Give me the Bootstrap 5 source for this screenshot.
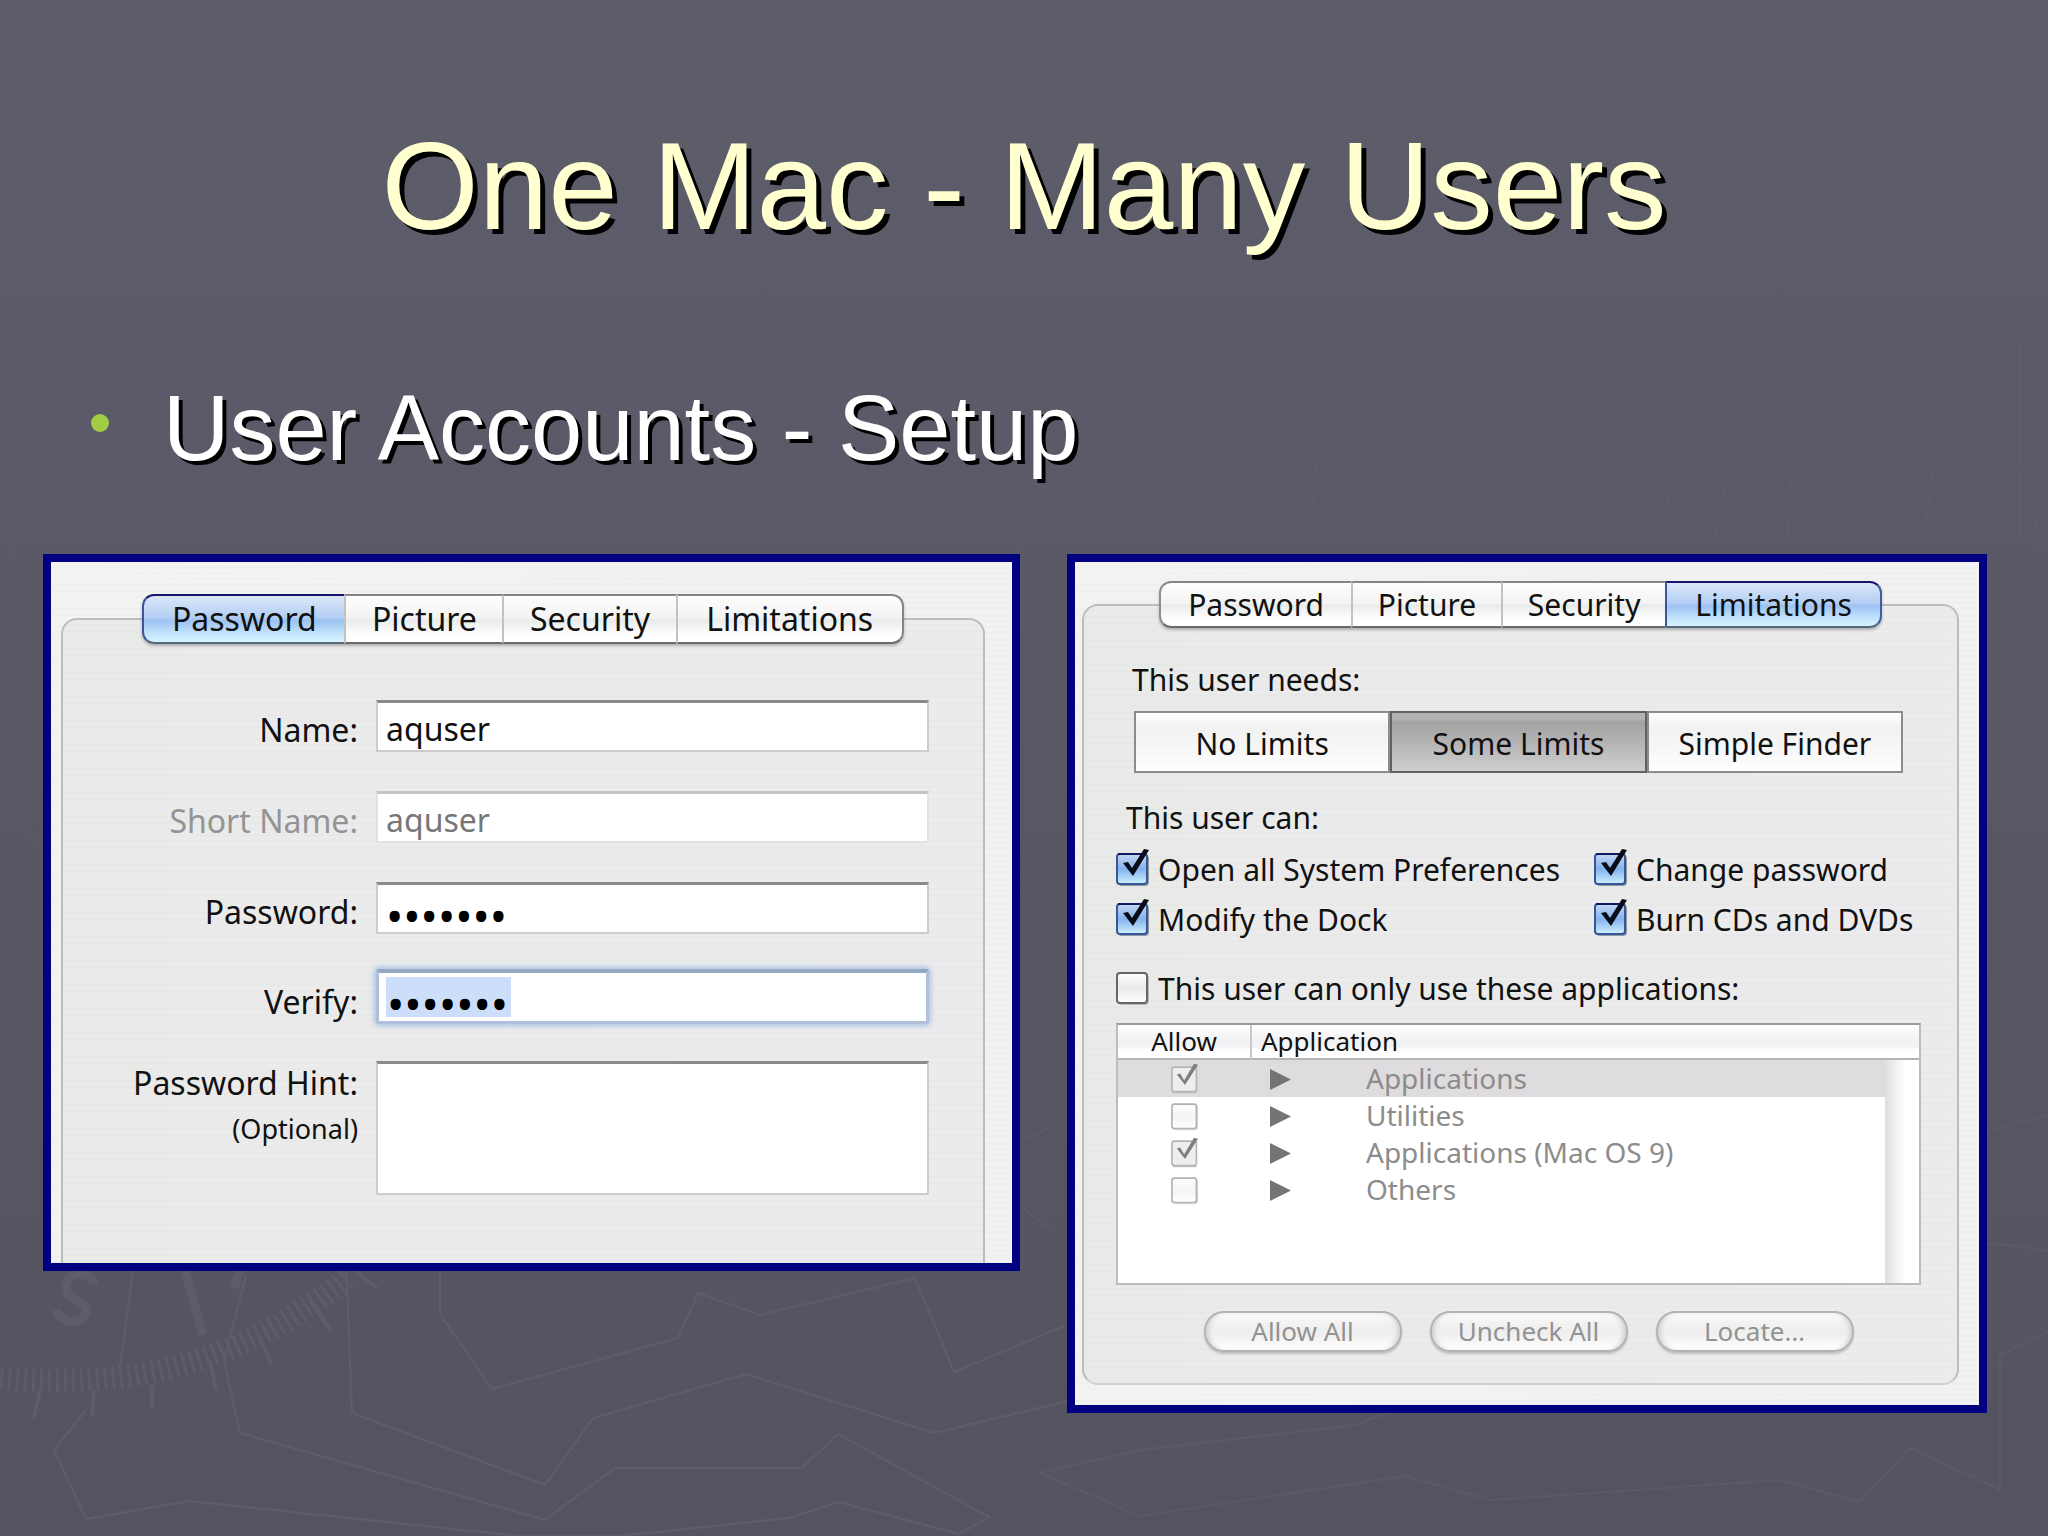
<!DOCTYPE html>
<html lang="en">
<head>
<meta charset="utf-8">
<meta name="viewport" content="width=device-width, initial-scale=1">
<title>One Mac - Many Users</title>
<link href="https://cdn.jsdelivr.net/npm/bootstrap@5.3.0/dist/css/bootstrap.min.css" rel="stylesheet">
<style>
body{font-family:"Noto Sans","Open Sans",sans-serif;color:#111;background:#555461}
.slide{position:relative;min-height:100vh;padding:114px 61px 40px 43px;background:linear-gradient(#5e5e6a 0,#5b5a69 25%,#575664 60%,#545360 100%);overflow:hidden}
.backdrop{position:absolute;inset:0;width:100%;height:100%;fill:none;stroke:#605f6d;stroke-width:3;opacity:.75}
.slide-body{position:relative}
.slide-title{font:400 125px/144px "Liberation Sans",Arial,sans-serif;color:#ffffcf;text-shadow:5px 5px 0 #000;margin:0 0 118px 18px}
.topic{font:400 92px/104px "Liberation Sans",Arial,sans-serif;color:#fff;text-shadow:4px 4px 0 #000;margin-bottom:74px;padding-left:48px;gap:54px}
.topic-dot{width:18px;height:18px;border-radius:50%;background:#a3cc45;margin-bottom:10px}
.shots{display:grid;grid-template-columns:minmax(0,977fr) minmax(0,920fr);gap:47px;align-items:start}
.shot{border:8px solid #000080;background:repeating-linear-gradient(transparent 0 4px,rgba(60,80,60,.018) 4px 6px),linear-gradient(90deg,#f2f4f1,#f3f3f3 30%,#f2f1f3)}
.shot-a{padding:32px 27px 0 10px;font-size:32px}
.shot-b{padding:19px 20px 20px 7px;font-size:30px}
.tabstrip{position:relative;z-index:1;display:grid;grid-template-columns:202fr 158fr 173fr 228fr;width:82.4%;margin:0 auto;border-radius:12px;box-shadow:0 2px 3px rgba(0,0,0,.25)}
.shot-a .tabstrip{height:50px;margin-bottom:-26px}
.shot-b .tabstrip{height:47px;margin-bottom:-24px}
.tabstrip button{border:2px solid #858585;border-right:0;border-bottom-color:#6a6a6a;border-left-color:#c2c2c2;padding:0;line-height:40px;color:#111;background:linear-gradient(#fdfdfd,#f2f3f2 48%,#e9ebea 52%,#fff 85%)}
.tabstrip button:first-child{border-left-color:#8f8f8f;border-radius:12px 0 0 12px}
.tabstrip button:last-child{border-right:2px solid #858585;border-radius:0 12px 12px 0}
.tabstrip button.current{border-color:#15186a #3f5c9c #56687f #3c559c;background:linear-gradient(#dbe7f8,#b4cff4 46%,#9cc2f3 54%,#c2e2fc 80%,#d8f3ff)}
.pane{border:2px solid #bcbebc;border-radius:16px;background:repeating-linear-gradient(transparent 0 4px,rgba(0,0,0,.012) 4px 6px),linear-gradient(90deg,#e9ebe8,#ebebeb 22%,#ecebed)}
.shot-a .pane{border-bottom:0;border-radius:16px 16px 0 0;padding:80px 54px 68px 0}
.shot-b .pane{padding:50px 36px 31px 32px;border-bottom-color:#d0d0d0}
.line{display:flex;align-items:flex-end;margin-bottom:39px}
.line label{width:313px;flex:none;padding-right:18px;text-align:right;line-height:44px}
.line.before-focus{margin-bottom:35px}
.line.focused{margin-bottom:37px}
.entry{flex:1;min-width:0;height:52px;border:2px solid #cdcdcd;border-top:3px solid #8a8a8a;border-radius:0;padding:4px 8px 0;background:#fff;color:#111;line-height:40px;display:block;outline:0;resize:none}
.entry:disabled{color:#777;border-color:#e2e2e2;border-top-color:#c4c2c4}
.entry[type=password]{font-family:"Noto Sans",sans-serif;font-size:46px;padding-top:12px;color:#000}
.focused .entry{height:55px;border:3px solid #b2bfdb;border-top:4px solid #94a9c0;border-radius:3px;box-shadow:0 0 5px 2px #a9c6e6;background:linear-gradient(#cddefa,#cddefa) 7px 4px/125px 40px no-repeat,#fff}
.line .hint{height:134px}
.dim{color:#949494}
.fine{font-size:27px}
.copy{line-height:44px;padding-top:2px}
.needs{padding-left:16px;margin-bottom:9px}
.levels{display:grid;grid-template-columns:repeat(3,1fr);margin:0 18px 21px 18px;height:62px}
.levels button{border:2px solid #8c8c8c;background:linear-gradient(#fff,#f1f1f1 25%,#f6f6f6 60%,#fff);padding:2px 0 0;color:#111}
.levels .pressed{border-color:#626262;background:linear-gradient(#b5b4b5 0 6px,#a3a2a3 9px,#b4b3b4 50%,#cfcecf)}
.can{padding-left:10px;margin-bottom:6px}
.rights{display:grid;grid-template-columns:478px 1fr;row-gap:6px;margin-right:-30px;margin-bottom:25px}
.tick-row{display:flex;align-items:center;gap:8px;height:44px;white-space:nowrap}
.tick-row label{line-height:44px;padding-top:3px}
.tick{appearance:none;margin:0;flex:none;width:34px;height:38px;background:url("data:image/svg+xml,%3Csvg xmlns='http://www.w3.org/2000/svg' viewBox='0 0 34 38'%3E%3Cdefs%3E%3ClinearGradient id='g' x2='0' y2='1'%3E%3Cstop stop-color='%23fff'/%3E%3Cstop offset='.5' stop-color='%23eaeaea'/%3E%3Cstop offset='1' stop-color='%23fff'/%3E%3C/linearGradient%3E%3C/defs%3E%3Crect x='2' y='6' width='31' height='31' rx='4' fill='%23bbb'/%3E%3Crect x='1' y='5' width='30' height='30' rx='3' fill='url(%23g)' stroke='%23666' stroke-width='2'/%3E%3C/svg%3E") center/100% 100% no-repeat}
.tick:checked{background-image:url("data:image/svg+xml,%3Csvg xmlns='http://www.w3.org/2000/svg' viewBox='0 0 34 38'%3E%3Cdefs%3E%3ClinearGradient id='g' x2='0' y2='1'%3E%3Cstop stop-color='%23c5d8f4'/%3E%3Cstop offset='.5' stop-color='%2384b2ec'/%3E%3Cstop offset='1' stop-color='%23cdf2ff'/%3E%3C/linearGradient%3E%3C/defs%3E%3Crect x='2' y='6' width='31' height='31' rx='4' fill='%238d9aa0'/%3E%3Crect x='1' y='5' width='30' height='30' rx='3' fill='url(%23g)' stroke='%233a5596' stroke-width='2'/%3E%3Cpath d='M2 5h28' stroke='%23111760' stroke-width='2'/%3E%3Cpath d='M7 14l5-1 4 6L28 0l5 1-16 26z' fill='%23080c18'/%3E%3C/svg%3E")}
.tick-off{display:block;width:28px;height:31px;margin:0 auto;opacity:.5}
.tick-off:checked{opacity:1;background-image:url("data:image/svg+xml,%3Csvg xmlns='http://www.w3.org/2000/svg' viewBox='0 0 34 38'%3E%3Crect x='1' y='5' width='30' height='30' rx='3' fill='%23eee' stroke='%23b4b4b4' stroke-width='2'/%3E%3Cpath d='M2 36h29' stroke='%23bbb' stroke-width='2'/%3E%3Cpath d='M7 14l4-1 5 8L28 1l5 1-16 25z' fill='%23808080'/%3E%3C/svg%3E")}
.only{margin-bottom:14px}
.applist{min-height:262px;border:2px solid #bcbcbc;border-top-color:#9a9a9a;background:linear-gradient(90deg,#dedede,#f0f0f2 30%,#fff 60%) right/34px 100% no-repeat,#fff;margin-bottom:26px}
.applist table{width:100%;table-layout:fixed;border-collapse:separate;border-spacing:0;background:linear-gradient(#fff,#fff) left/calc(100% - 34px) 100% no-repeat;font-size:28px;color:#8c8c8c}
.applist th{height:35px;font-size:26px;font-weight:400;line-height:30px;color:#111;padding:0 0 2px;border-bottom:2px solid #b4b4b4;background:linear-gradient(#fff,#f2f2f4 45%,#f2f2f4 65%,#fff 75%)}
.applist th:first-child{border-right:2px solid #c9c9c9}
.applist th:nth-child(2){padding-left:9px}
.applist td{height:37px;padding:0;line-height:37px}
.applist .chosen td:not(:last-child){background:#dedcde}
.twist{width:21px;height:21px;margin:0 75px 4px 18px;fill:#747474}
.pills{display:flex;justify-content:center;gap:28px;padding-left:20px}
.pills button{width:198px;height:41px;border:2px solid #b3b3b3;border-radius:20px;background:linear-gradient(#fafafa,#eee 45%,#f0f0f0 60%,#fff);box-shadow:0 2px 2px rgba(0,0,0,.18),inset 5px 0 5px -3px #ccc,inset -5px 0 5px -3px #ccc;color:#929292;font-size:26px;line-height:34px;padding:0 0 1px}
</style>
<script src="https://cdn.jsdelivr.net/npm/bootstrap@5.3.0/dist/js/bootstrap.bundle.min.js" defer></script>
</head>
<body>
<main class="slide">
<svg class="backdrop" viewBox="0 0 2048 1536" preserveAspectRatio="xMidYMid slice" aria-hidden="true">
<path d="M133 1270l-13 97M86 1410l-32 40 32 69 103-18 330 35h100l170-18 50-16 120 32 30-17-151-83-36 34H615l-70 52-305-87-16-72 22-86M346 1260l6 153 193 72 48-67 153-44 188 59 134-32M440 1260v54l52 75 186-51 20-45 62 22 155-37 39 94 110-46" stroke-width="2.5"/>
<path d="M0 1378q205 20 350-103" stroke-width="23" stroke-dasharray="3 5"/>
<path d="M40 1390l-6 28M94 1390l-2 27M152 1385v23M210 1360l6 30M258 1335l14 30M310 1300l20 30M355 1270l22 18" stroke-width="4"/>
<path d="M94 1284c-4-14-28-14-28 4 0 14 22 12 20 24-3 14-26 12-30-2M185 1270l18 65M240 1270l-6 18" stroke-width="9"/>
<path d="M1040 1473l100-23 215-25 60-22M1040 1473l100 43 265-40 85 24 290-20 80 22 50-54 90 42V1355l48-24M1920 1240l90 5 38 6M1970 1138l78-24M1026 1140l25-13M1020 1205l30 25M1190 425l128 21-9 96M1408 405l20 41 58 60M1600 425l66 38 4 72M1735 430l-20 110M1795 430l-8 110M1880 415l-45 125M1950 340l-25 190M2020 340v200M1990 390l55 160" stroke-width="2" opacity=".75"/>
<path d="M0 610l43-190 60 8M10 800l33 50M0 1060l40 40M50 505l35 40M480 500l120-20 140 30 90-40 130 35M1540 440l60 100" stroke-width="2" opacity=".4"/>
</svg>
<div class="slide-body">
<h1 class="slide-title text-center">One Mac - Many Users</h1>
<h2 class="topic d-flex align-items-center"><span class="topic-dot flex-shrink-0"></span>User Accounts - Setup</h2>
<div class="shots">

<section class="shot shot-a" aria-label="Password settings">
<div class="tabstrip" role="tablist">
<button type="button" role="tab" class="current" aria-selected="true">Password</button><button type="button" role="tab">Picture</button><button type="button" role="tab">Security</button><button type="button" role="tab">Limitations</button>
</div>
<form class="pane">
<div class="line"><label for="name">Name:</label><input id="name" class="entry" type="text" value="aquser"></div>
<div class="line"><label class="dim" for="short">Short Name:</label><input id="short" class="entry" type="text" value="aquser" disabled></div>
<div class="line before-focus"><label for="pass">Password:</label><input id="pass" class="entry" type="password" value="abcdefg" autocomplete="off"></div>
<div class="line focused"><label for="verify">Verify:</label><input id="verify" class="entry" type="password" value="abcdefg" autocomplete="off"></div>
<div class="line align-items-start mb-0"><label for="hint">Password Hint:<br><span class="fine">(Optional)</span></label><textarea id="hint" class="entry hint"></textarea></div>
</form>
</section>

<section class="shot shot-b" aria-label="Limitations settings">
<div class="tabstrip" role="tablist">
<button type="button" role="tab">Password</button><button type="button" role="tab">Picture</button><button type="button" role="tab">Security</button><button type="button" role="tab" class="current" aria-selected="true">Limitations</button>
</div>
<form class="pane">
<div class="copy needs">This user needs:</div>
<div class="levels" role="group" aria-label="Limits">
<button type="button">No Limits</button><button type="button" class="pressed" aria-pressed="true">Some Limits</button><button type="button">Simple Finder</button>
</div>
<div class="copy can">This user can:</div>
<div class="rights">
<div class="tick-row"><input class="tick" type="checkbox" id="r1" checked><label for="r1">Open all System Preferences</label></div>
<div class="tick-row"><input class="tick" type="checkbox" id="r2" checked><label for="r2">Change password</label></div>
<div class="tick-row"><input class="tick" type="checkbox" id="r3" checked><label for="r3">Modify the Dock</label></div>
<div class="tick-row"><input class="tick" type="checkbox" id="r4" checked><label for="r4">Burn CDs and DVDs</label></div>
</div>
<div class="tick-row only"><input class="tick" type="checkbox" id="only"><label for="only">This user can only use these applications:</label></div>
<div class="applist">
<table>
<colgroup><col style="width:134px"><col><col style="width:34px"></colgroup>
<thead><tr><th class="text-center">Allow</th><th>Application</th><th></th></tr></thead>
<tbody>
<tr class="chosen"><td><input class="tick tick-off" type="checkbox" aria-label="Applications" checked disabled></td><td><svg class="twist" viewBox="0 0 20 20"><path d="M0 0l20 10L0 20z"/></svg>Applications</td><td></td></tr>
<tr><td><input class="tick tick-off" type="checkbox" aria-label="Utilities" disabled></td><td><svg class="twist" viewBox="0 0 20 20"><path d="M0 0l20 10L0 20z"/></svg>Utilities</td><td></td></tr>
<tr><td><input class="tick tick-off" type="checkbox" aria-label="Applications (Mac OS 9)" checked disabled></td><td><svg class="twist" viewBox="0 0 20 20"><path d="M0 0l20 10L0 20z"/></svg>Applications (Mac OS 9)</td><td></td></tr>
<tr><td><input class="tick tick-off" type="checkbox" aria-label="Others" disabled></td><td><svg class="twist" viewBox="0 0 20 20"><path d="M0 0l20 10L0 20z"/></svg>Others</td><td></td></tr>
</tbody>
</table>
</div>
<div class="pills"><button type="button" disabled>Allow All</button><button type="button" disabled>Uncheck All</button><button type="button" disabled>Locate…</button></div>
</form>
</section>
</div>
</div>
</main>
</body>
</html>
